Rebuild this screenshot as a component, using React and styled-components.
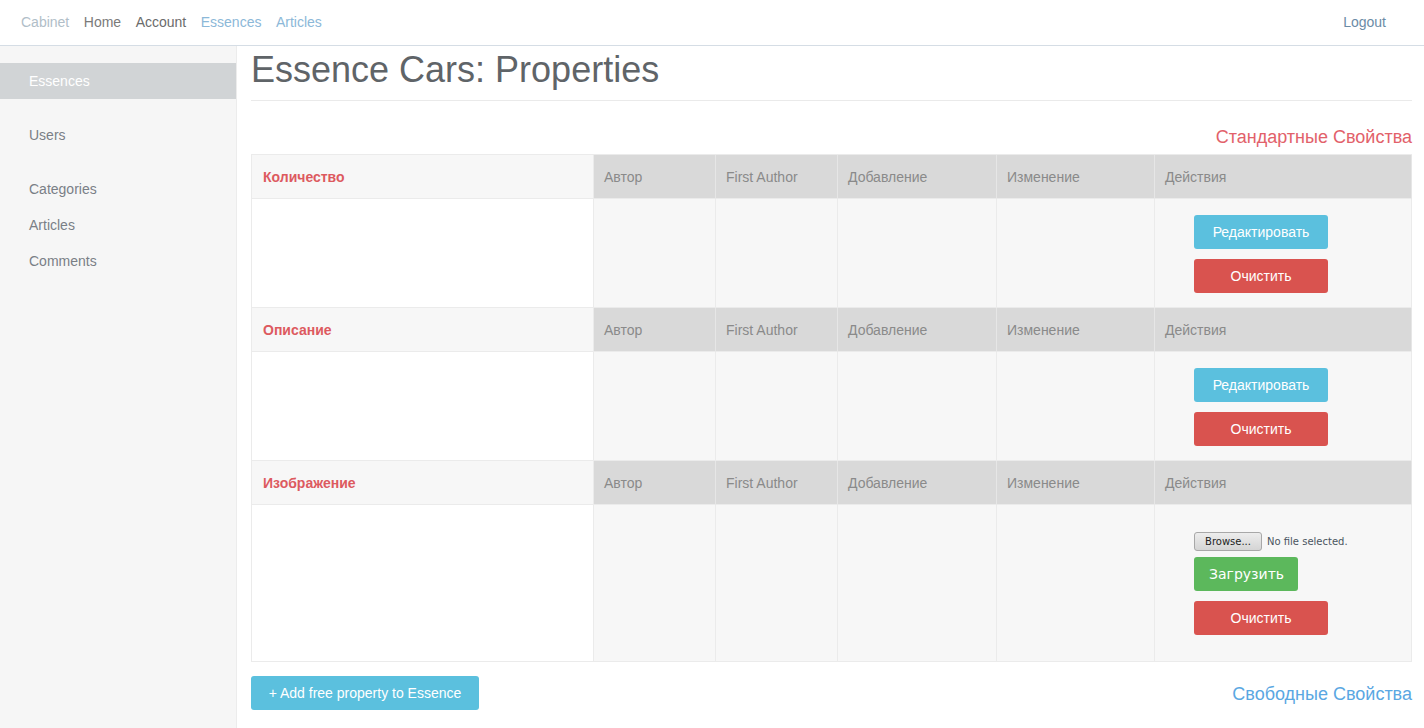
import React from "react";
import styled, { createGlobalStyle } from "styled-components";

const Global = createGlobalStyle`
  html, body { margin: 0; padding: 0; background: #fff; }
  body { font-family: "Liberation Sans", Arial, sans-serif; font-size: 14px; line-height: 20px; color: #333; }
  * { box-sizing: border-box; }
`;

const Page = styled.div`
  display: flex;
  flex-direction: column;
  min-height: 728px;
`;

const Navbar = styled.nav`
  height: 46px;
  border-bottom: 1px solid #d5dde5;
  display: flex;
  align-items: center;
  padding: 0 38px 1px 21px;
`;

const NavLinks = styled.div`
  display: flex;
  gap: 14.5px;
  flex: 1;
`;

const NavLink = styled.a`
  color: ${(p) => p.$color};
  text-decoration: none;
  font-size: 14px;
`;

const Body = styled.div`
  display: flex;
  flex: 1;
`;

const Sidebar = styled.aside`
  width: 237px;
  flex-shrink: 0;
  background: #f6f6f6;
  border-right: 1px solid #ececec;
  padding-top: 17px;
`;

const SideGroup = styled.ul`
  list-style: none;
  margin: 0 0 18px;
  padding: 0;
`;

const SideItem = styled.li`
  height: 36px;
  display: flex;
  align-items: center;
  padding-left: 29px;
  font-size: 14px;
  color: ${(p) => (p.$active ? "#fff" : "#7a7f86")};
  background: ${(p) => (p.$active ? "#d1d4d6" : "transparent")};
`;

const Main = styled.main`
  flex: 1;
  padding: 0 12px 0 14px;
`;

const Title = styled.h1`
  margin: 4px 0 0;
  padding-bottom: 10px;
  font-size: 36px;
  line-height: 40px;
  font-weight: 400;
  color: #5f6468;
  border-bottom: 1px solid #eaeaea;
`;

const SectionLabel = styled.div`
  text-align: right;
  font-size: 18px;
  line-height: 20px;
  color: ${(p) => p.$color};
  margin: ${(p) => p.$margin};
`;

const Table = styled.div`
  display: grid;
  grid-template-columns: 342px 122px 122px 159px 158px 1fr;
  border-top: 1px solid #ebebeb;
  border-left: 1px solid #ebebeb;
`;

const HeadCell = styled.div`
  height: 44px;
  display: flex;
  align-items: center;
  padding-left: ${(p) => (p.$name ? "11px" : "10px")};
  background: ${(p) => (p.$name ? "#f7f7f7" : "#d9d9d9")};
  color: ${(p) => (p.$name ? "#dd5a5f" : "#8a8a8a")};
  font-weight: ${(p) => (p.$name ? 700 : 400)};
  border-right: 1px solid ${(p) => (p.$name ? "#ebebeb" : "#e6e6e6")};
  border-bottom: 1px solid #ebebeb;
`;

const BodyCell = styled.div`
  height: ${(p) => p.$h}px;
  background: ${(p) => (p.$name ? "#fff" : "#f7f7f7")};
  border-right: 1px solid #ebebeb;
  border-bottom: 1px solid #ebebeb;
`;

const ActionCell = styled(BodyCell)`
  display: flex;
  flex-direction: column;
  align-items: flex-start;
  justify-content: center;
  padding: ${(p) => (p.$upload ? "0" : "1px")} 0 0 39px;
  gap: 10px;
`;

const Btn = styled.button`
  border: 0;
  border-radius: 3px;
  height: 34px;
  width: ${(p) => (p.$w ? p.$w + "px" : "auto")};
  padding: 0 15px;
  font-family: "Liberation Sans", Arial, sans-serif;
  font-size: 14px;
  color: #fff;
  background: ${(p) => p.$bg};
  cursor: pointer;
`;

const UploadBtn = styled(Btn)`
  font-family: "DejaVu Sans", sans-serif;
  font-size: 14px;
  padding: 0 15px;
  width: 104px;
`;

const UploadGroup = styled.div`
  display: flex;
  flex-direction: column;
  gap: 5px;
`;

const FileRow = styled.div`
  display: flex;
  align-items: center;
  gap: 5px;
  font-family: "DejaVu Sans", sans-serif;
  font-size: 10px;
  color: #4a5560;
`;

const BrowseBtn = styled.span`
  width: 68px;
  height: 19px;
  display: flex;
  align-items: center;
  justify-content: center;
  border: 1px solid #a8a8a8;
  border-radius: 3px;
  background: linear-gradient(#ededed, #d4d4d4);
  color: #222;
  font-size: 10px;
`;

const Footer = styled.div`
  display: flex;
  justify-content: space-between;
  align-items: flex-start;
  margin-top: 14px;
`;

const rows = [
  { name: "Количество", h: 109, type: "edit" },
  { name: "Описание", h: 109, type: "edit" },
  { name: "Изображение", h: 157, type: "upload" },
];

const heads = ["Автор", "First Author", "Добавление", "Изменение", "Действия"];

export default function App() {
  return (
    <Page>
      <Global />
      <Navbar>
        <NavLinks>
          <NavLink $color="#b1bec8">Cabinet</NavLink>
          <NavLink $color="#7a7a7a">Home</NavLink>
          <NavLink $color="#6b6b6b">Account</NavLink>
          <NavLink $color="#8cb8d8">Essences</NavLink>
          <NavLink $color="#8cb8d8">Articles</NavLink>
        </NavLinks>
        <NavLink $color="#6b8ba6">Logout</NavLink>
      </Navbar>
      <Body>
        <Sidebar>
          <SideGroup>
            <SideItem $active>Essences</SideItem>
          </SideGroup>
          <SideGroup>
            <SideItem>Users</SideItem>
          </SideGroup>
          <SideGroup>
            <SideItem>Categories</SideItem>
            <SideItem>Articles</SideItem>
            <SideItem>Comments</SideItem>
          </SideGroup>
        </Sidebar>
        <Main>
          <Title>Essence Cars: Properties</Title>
          <SectionLabel $color="#e2616a" $margin="26px 0 7px">
            Стандартные Свойства
          </SectionLabel>
          <Table>
            {rows.map((r) => (
              <React.Fragment key={r.name}>
                <HeadCell $name>{r.name}</HeadCell>
                {heads.map((h) => (
                  <HeadCell key={h}>{h}</HeadCell>
                ))}
                <BodyCell $name $h={r.h} />
                <BodyCell $h={r.h} />
                <BodyCell $h={r.h} />
                <BodyCell $h={r.h} />
                <BodyCell $h={r.h} />
                {r.type === "edit" ? (
                  <ActionCell $h={r.h}>
                    <Btn $bg="#5bc0de" $w={134}>Редактировать</Btn>
                    <Btn $bg="#d9534f" $w={134}>Очистить</Btn>
                  </ActionCell>
                ) : (
                  <ActionCell $h={r.h} $upload>
                    <UploadGroup>
                      <FileRow>
                        <BrowseBtn>Browse...</BrowseBtn>
                        <span>No file selected.</span>
                      </FileRow>
                      <UploadBtn $bg="#5cb85c">Загрузить</UploadBtn>
                    </UploadGroup>
                    <Btn $bg="#d9534f" $w={134}>Очистить</Btn>
                  </ActionCell>
                )}
              </React.Fragment>
            ))}
          </Table>
          <Footer>
            <Btn $bg="#5bc0de" $w={228}>+ Add free property to Essence</Btn>
            <SectionLabel $color="#5aa7e2" $margin="8px 0 0">
              Свободные Свойства
            </SectionLabel>
          </Footer>
        </Main>
      </Body>
    </Page>
  );
}
